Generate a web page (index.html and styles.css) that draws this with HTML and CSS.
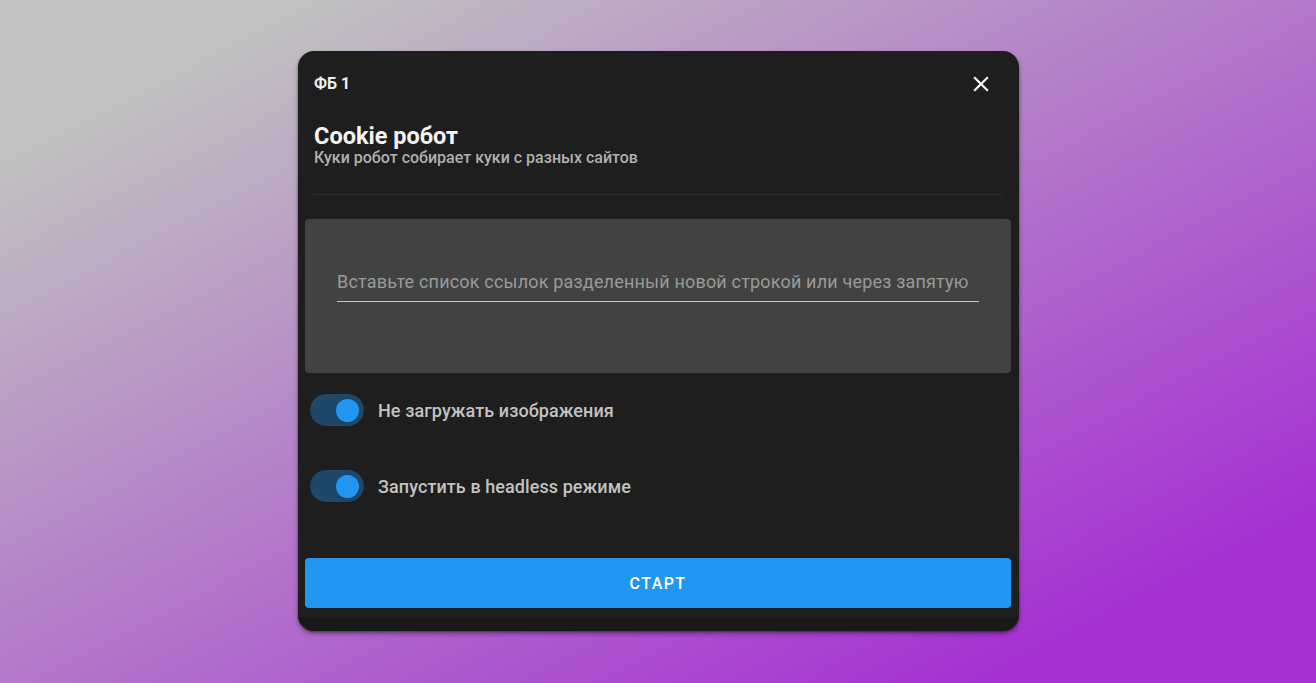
FILE: index.html
```html
<!DOCTYPE html>
<html lang="ru">
<head>
<meta charset="utf-8">
<title>Cookie робот</title>
<link rel="stylesheet" href="styles.css">
</head>
<body>
<div class="page">
  <div class="card">
    <div class="card-head">
      <span class="tag">ФБ 1</span>
      <button class="close" aria-label="Закрыть">
        <svg viewBox="0 0 24 24" width="26" height="26"><path fill="#fff" d="M19 6.41L17.59 5 12 10.59 6.41 5 5 6.41 10.59 12 5 17.59 6.41 19 12 13.41 17.59 19 19 17.59 13.41 12z"/></svg>
      </button>
    </div>
    <div class="titles">
      <div class="title">Cookie робот</div>
      <div class="subtitle">Куки робот собирает куки с разных сайтов</div>
    </div>
    <div class="divider"></div>
    <div class="field-box">
      <div class="field">Вставьте список ссылок разделенный новой строкой или через запятую</div>
    </div>
    <div class="toggles">
      <label class="toggle-row">
        <span class="track"><span class="thumb"></span></span>
        <span class="toggle-label">Не загружать изображения</span>
      </label>
      <label class="toggle-row">
        <span class="track"><span class="thumb"></span></span>
        <span class="toggle-label">Запустить в headless режиме</span>
      </label>
    </div>
    <button class="start">СТАРТ</button>
    <div class="card-foot"></div>
  </div>
</div>
</body>
</html>
```
FILE: styles.css
```css
html, body {
  margin: 0;
  padding: 0;
  height: 100%;
}
body {
  font-family: Roboto, "Noto Sans", sans-serif;
  background: linear-gradient(to bottom right, #c1c1c1 12%, #a52fd3 88%);
}
.page {
  height: 683px;
  box-sizing: border-box;
  padding: 51px 0 0 298px;
  display: flex;
  align-items: flex-start;
}
.card {
  width: 721px;
  height: 580px;
  background: #1e1e1e;
  border-radius: 16px;
  overflow: hidden;
  display: flex;
  flex-direction: column;
  box-shadow: 0 3px 5px rgba(0,0,0,0.35), 0 1px 2px rgba(0,0,0,0.3);
}
.card-head {
  display: flex;
  align-items: center;
  justify-content: space-between;
  padding: 20px 25px 0 16px;
  height: 26px;
}
.tag {
  color: #eeeeee;
  font-size: 16px;
  font-weight: 700;
  line-height: 20px;
}
.close {
  width: 26px;
  height: 26px;
  padding: 0;
  border: 0;
  background: none;
  display: flex;
  align-items: center;
  justify-content: center;
}
.titles {
  padding: 26px 16px 0;
}
.title {
  color: #f5f5f5;
  font-size: 23.5px;
  font-weight: 700;
  line-height: 26px;
}
.subtitle {
  color: #b0b0b0;
  font-size: 16px;
  font-weight: 500;
  line-height: 18px;
}
.divider {
  margin: 27px 17px 0 16px;
  height: 1px;
  background: #2f2f2f;
}
.field-box {
  margin: 24px 8px 0 7px;
  height: 154px;
  box-sizing: border-box;
  background: #424242;
  border-radius: 4px;
  padding: 51px 32px 0;
}
.field {
  color: #9a9a9a;
  font-size: 18px;
  letter-spacing: 0.18px;
  line-height: 24px;
  padding-bottom: 7px;
  border-bottom: 1px solid #c4c4c4;
  white-space: nowrap;
}
.toggles {
  margin-top: 17px;
  padding-left: 12px;
  display: flex;
  flex-direction: column;
  gap: 36px;
}
.toggle-row {
  display: flex;
  align-items: center;
  height: 40px;
  gap: 14px;
}
.track {
  width: 54px;
  height: 32px;
  border-radius: 16px;
  background: #1f4768;
  display: flex;
  align-items: center;
  justify-content: flex-end;
  padding-right: 5px;
  box-sizing: border-box;
}
.thumb {
  width: 23px;
  height: 23px;
  border-radius: 50%;
  background: #2196f3;
}
.toggle-label {
  color: #c2c2c2;
  font-size: 18px;
  font-weight: 500;
  letter-spacing: 0.08px;
}
.start {
  margin: 52px 8px 0 7px;
  height: 50px;
  border: 0;
  border-radius: 4px;
  background: #2196f3;
  color: #fff;
  font-family: Roboto, sans-serif;
  font-size: 16px;
  font-weight: 500;
  letter-spacing: 1.4px;
}
.card-foot {
  margin-top: 9px;
  flex: 1;
  background: #191919;
}
```
